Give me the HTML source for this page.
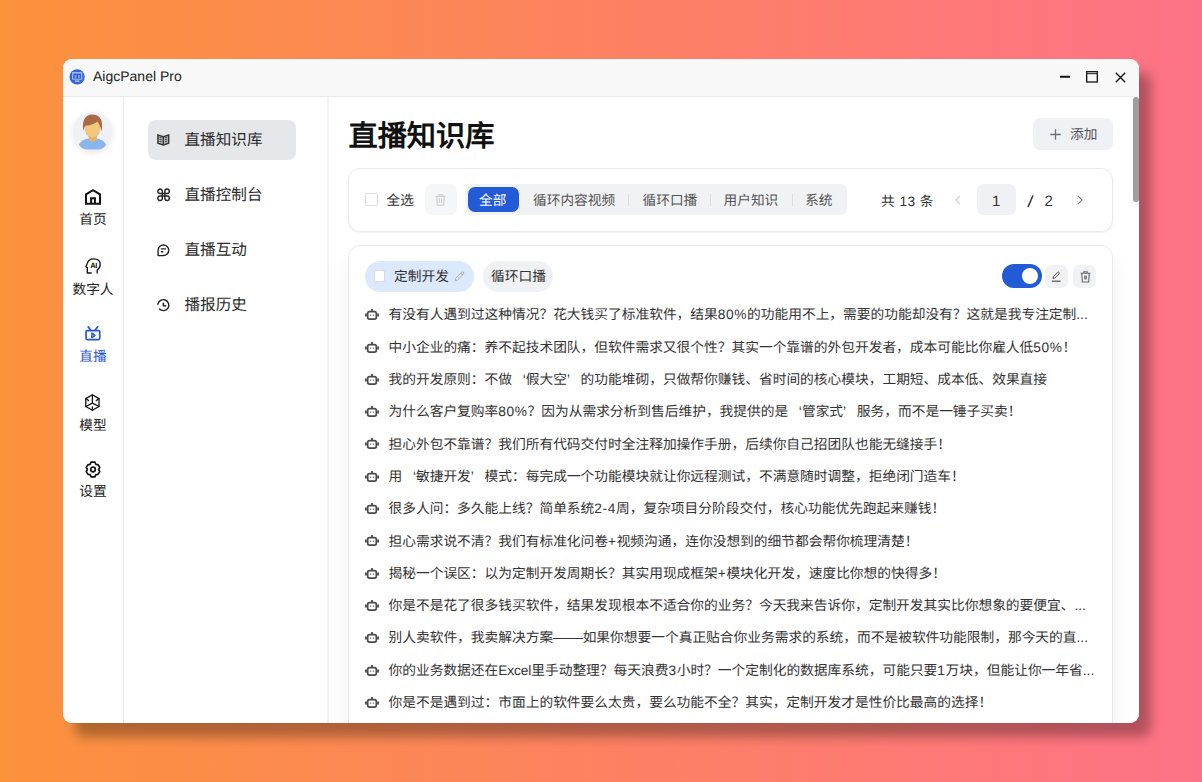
<!DOCTYPE html>
<html lang="zh-CN"><head><meta charset="utf-8">
<style>
*{box-sizing:border-box;margin:0;padding:0}
html,body{width:1202px;height:782px;overflow:hidden}
body{font-family:"Liberation Sans",sans-serif;text-rendering:geometricPrecision;background:linear-gradient(to right,#fb923c,#fe7287);position:relative;color:#333}
.abs{position:absolute}
#win{position:absolute;left:63px;top:59px;width:1076px;height:664px;border-radius:9px;background:#fff;overflow:hidden;box-shadow:12px 14px 12px rgba(0,0,0,0.3)}
#title{position:absolute;left:0;top:0;width:1076px;height:38px;background:#f8f8f9;border-bottom:1px solid #ebebec}
#side1{position:absolute;left:0;top:38px;width:61px;height:626px;border-right:1px solid #ececec;background:#fff}
#side2{position:absolute;left:61px;top:38px;width:205px;height:626px;border-right:2px solid #f4f4f6;background:#fff}
#main{position:absolute;left:266px;top:38px;width:810px;height:626px;background:#fff}
.t{position:absolute;white-space:nowrap;line-height:1}
.menu{left:121.5px;font-size:15.6px;color:#2a2a2a}
.card{border:1px solid #e8e9eb;border-radius:10px;background:#fff;box-shadow:0 1px 3px rgba(0,0,0,0.05)}
.tab{top:134.5px;font-size:13.7px;color:#555}
.vd{top:134.5px;width:1px;height:12px;background:#dcdee2}
.row{left:325.5px;font-size:13.72px;color:#333}
.ql,.qr{display:inline-block;width:13.72px}
.ql{text-align:right}
.dash{display:inline-block;width:29.5px;letter-spacing:0;transform:scaleX(1.1);transform-origin:left}
.asc{letter-spacing:0.6px}
.asl{letter-spacing:-0.12px}
.ell{letter-spacing:0;font-size:13.72px}
.lbl{left:0;width:60px;text-align:center;font-size:13.7px;color:#222}
svg{position:absolute;overflow:visible}
</style></head><body>
<div id="win">
  <div id="title">
    <svg style="left:6px;top:10px" width="16" height="16" viewBox="0 0 16 16">
      <circle cx="8.1" cy="7.9" r="7.6" fill="#3764d6"/>
      <rect x="3" y="3" width="10.3" height="7.8" rx="0.8" fill="#9db8f3"/>
      <rect x="4.2" y="4.6" width="7.8" height="5" fill="#2f5cd0"/>
      <rect x="5.6" y="5.9" width="1.8" height="3" fill="#7c9ef0"/>
      <rect x="9" y="5.9" width="1.8" height="3" fill="#7c9ef0"/>
      <rect x="5.9" y="11.4" width="4.6" height="1.6" fill="#a8c2f6"/>
    </svg>
    <div class="t" style="left:30px;top:10px;font-size:14px;color:#222">AigcPanel Pro</div>
    <svg style="left:996px;top:12px" width="12" height="12" viewBox="0 0 12 12"><path d="M1 5.8H11" stroke="#111" stroke-width="2"/></svg>
    <svg style="left:1023px;top:12px" width="12" height="12" viewBox="0 0 12 12"><rect x="0.7" y="0.7" width="10.6" height="10.3" fill="none" stroke="#111" stroke-width="1.3"/><path d="M0.7 2.6H11.3" stroke="#444" stroke-width="1.2"/></svg>
    <svg style="left:1052px;top:12.5px" width="11" height="11" viewBox="0 0 11 11"><path d="M0.8 0.8L10.2 10.2M10.2 0.8L0.8 10.2" stroke="#111" stroke-width="1.35"/></svg>
  </div>

  <div id="side1">
    <div class="abs" style="left:10px;top:15px;width:39px;height:39px;border-radius:50%;background:#f0f1f4;box-shadow:0 2px 6px rgba(0,0,0,0.10);overflow:hidden">
      <svg style="left:0;top:0" width="39" height="39" viewBox="0 0 39 39">
        <path d="M5.8 32.6Q9.5 27 16 26.5H23Q29.5 27 33.2 32.6L30.2 37.6H8.8Z" fill="#89b4ec"/>
        <path d="M15.7 22H23.7V28.3Q19.7 31 15.7 28.3Z" fill="#e6b567"/>
        <path d="M12.3 14Q12 22 16 24.6L19.5 26.4L23 24.6Q27 22 26.7 14Q26 9.2 19.5 9.2Q13 9.2 12.3 14Z" fill="#f3c87c" stroke="#c08a55" stroke-width="0.35"/>
        <path d="M10.2 19.2Q9.3 12 11 7.8Q13.6 2.6 19.6 2.5Q25.6 2.7 28.1 7.5Q29.8 12 28.7 19.6Q27.7 16 26.7 13.6Q25.8 11.2 24.3 9.6Q20.5 13.2 12.4 13.8Q11 15.5 10.2 19.2Z" fill="#a86b45"/>
      </svg>
    </div>
    <svg style="left:22px;top:92px" width="16" height="16" viewBox="0 0 16 16" fill="none" stroke="#111" stroke-width="2" stroke-linejoin="miter">
      <path d="M1 5.3L8 1.1L15 5.3V14.8H1Z"/><path d="M6.1 14.8V9.3H9.9V14.8"/>
    </svg>
    <div class="t lbl" style="top:116px">首页</div>
    <svg style="left:22px;top:160.5px" width="16" height="16" viewBox="0 0 16 16" fill="none" stroke="#111" stroke-width="1.35" stroke-linecap="round" stroke-linejoin="round">
      <path d="M12.2 15.1V12Q15.2 10.2 15.2 6.6Q15.2 0.8 8.6 0.8Q3.5 0.8 2.4 5.2L0.9 8.6L2.3 9.6V15H6.2"/>
      <text x="8.7" y="9.8" font-size="7.6" font-weight="bold" font-family="Liberation Sans" text-anchor="middle" fill="#111" stroke="none" letter-spacing="-0.3">AI</text>
    </svg>
    <div class="t lbl" style="top:186px">数字人</div>
    <svg style="left:22px;top:228.5px" width="16" height="16" viewBox="0 0 16 16" fill="none" stroke="#2b57cf" stroke-width="1.7" stroke-linecap="round" stroke-linejoin="round">
      <rect x="1.05" y="4.55" width="13.7" height="9" rx="1.2"/><path d="M3.2 0.9L5.4 3.7M12.6 0.9L10.4 3.7"/><path d="M6.9 7.1V11.6L10 9.35Z" stroke-width="1.5"/>
    </svg>
    <div class="t lbl" style="top:252.5px;color:#2b57cf">直播</div>
    <svg style="left:22px;top:296.5px" width="16" height="17" viewBox="0 0 16 17" fill="none" stroke="#111" stroke-width="1.3" stroke-linejoin="round" stroke-linecap="round">
      <path d="M7.4 0.8L14 4.6V12.5L7.4 16.3L0.8 12.5V4.6Z"/><path d="M7.4 0.8V9.1L0.8 12.5M7.4 9.1L14 12.5"/>
      <path d="M0.8 4.6L3.5 6.6M14 4.6L11.3 6.6M7.4 16.3V12.9"/>
    </svg>
    <div class="t lbl" style="top:322px">模型</div>
    <svg style="left:22px;top:364px" width="16" height="17" viewBox="0 0 16 17" fill="none" stroke="#111" stroke-width="1.7" stroke-linejoin="round">
      <path d="M6 1.2H10L10.8 3.3L13 3.6L14.8 6.4L13.6 8.5L14.8 10.6L13 13.4L10.8 13.7L10 15.8H6L5.2 13.7L3 13.4L1.2 10.6L2.4 8.5L1.2 6.4L3 3.6L5.2 3.3Z"/>
      <circle cx="8" cy="8.5" r="2.3"/>
    </svg>
    <div class="t lbl" style="top:388px">设置</div>
  </div>
  <div id="side2"></div>
  <div id="main"></div>
  <!-- main -->
  <div class="t" style="left:285.5px;top:63.5px;font-size:29.2px;font-weight:bold;color:#111">直播知识库</div>
  <div class="abs" style="left:970px;top:59px;width:80px;height:31.5px;border-radius:7px;background:#f0f1f4"></div>
  <svg style="left:986.5px;top:69.5px" width="11" height="11" viewBox="0 0 11 11"><path d="M5.5 0.3V10.7M0.3 5.5H10.7" stroke="#6b7079" stroke-width="1.3"/></svg>
  <div class="t" style="left:1007px;top:69px;font-size:13.7px;color:#50535a">添加</div>

  <div class="abs card" style="left:285px;top:108.5px;width:765px;height:64.5px;border-radius:12px;box-shadow:0 1px 2px rgba(0,0,0,0.06)"></div>
  <div class="abs" style="left:302px;top:133.5px;width:13px;height:13px;border:1px solid #d9dbe0;border-radius:2px;background:#fff"></div>
  <div class="t" style="left:323.5px;top:135px;font-size:13.7px;color:#333">全选</div>
  <div class="abs" style="left:362px;top:125px;width:31.5px;height:31px;border-radius:7px;background:#f5f6f8"></div>
  <svg style="left:372px;top:135px" width="11" height="12" viewBox="0 0 11 12" fill="none" stroke="#c9ccd2" stroke-width="1.1">
    <path d="M0.5 2.2H10.5M3.8 2.2V0.8H7.2V2.2M1.8 2.2L2.3 11.2H8.7L9.2 2.2M4.3 4.5V9M6.7 4.5V9"/>
  </svg>
  <div class="abs" style="left:402px;top:125px;width:381.5px;height:31px;border-radius:7px;background:#f1f2f4"></div>
  <div class="abs" style="left:405px;top:128px;width:51px;height:25.4px;border-radius:7px;background:#235ad6"></div>
  <div class="t" style="left:416px;top:134.5px;font-size:13.7px;color:#fff">全部</div>
  <div class="t tab" style="left:470px">循环内容视频</div>
  <div class="abs vd" style="left:565px"></div>
  <div class="t tab" style="left:579.5px">循环口播</div>
  <div class="abs vd" style="left:647px"></div>
  <div class="t tab" style="left:660.5px">用户知识</div>
  <div class="abs vd" style="left:728.5px"></div>
  <div class="t tab" style="left:742px">系统</div>

  <div class="t" style="left:818px;top:135.5px;font-size:13.7px;color:#333;letter-spacing:0.45px">共 13 条</div>
  <svg style="left:891.5px;top:136px" width="6" height="10" viewBox="0 0 6 10"><path d="M5 0.8L1 5L5 9.2" fill="none" stroke="#c8cacf" stroke-width="1.1"/></svg>
  <div class="abs" style="left:913.8px;top:125px;width:39px;height:31px;border-radius:7px;background:#f0f1f4"></div>
  <div class="t" style="left:929px;top:135px;font-size:15px;color:#333">1</div>
  <svg style="left:964px;top:136px" width="7" height="13" viewBox="0 0 7 13"><path d="M6 0.5L1 12" stroke="#333" stroke-width="1.5"/></svg>
  <div class="t" style="left:981.5px;top:135px;font-size:15px;color:#333">2</div>
  <svg style="left:1014px;top:136px" width="6" height="10" viewBox="0 0 6 10"><path d="M1 0.8L5 5L1 9.2" fill="none" stroke="#7a7d84" stroke-width="1.1"/></svg>

  <div class="abs card" style="left:285px;top:185.5px;width:765px;height:520px;border-radius:12px;box-shadow:0 12px 22px rgba(0,0,0,0.06)"></div>
  <!-- list -->
  <div class="abs" style="left:301.9px;top:201.5px;width:109px;height:31.4px;border-radius:16px;background:#dce8fb"></div>
  <div class="abs" style="left:310.5px;top:211.4px;width:11.5px;height:11.5px;border:1px solid #d4dbe6;border-radius:2px;background:#fff"></div>
  <div class="t" style="left:331px;top:210.5px;font-size:13.72px;color:#333">定制开发</div>
  <svg style="left:391px;top:212px" width="11" height="11" viewBox="0 0 11 11"><path d="M1.2 9.8L1.6 7.4L7.8 1.2Q8.6 0.6 9.4 1.4Q10.2 2.2 9.6 3L3.4 9.2Z M6.8 2.2L8.6 4" fill="none" stroke="#a9b0bb" stroke-width="1"/></svg>
  <div class="abs" style="left:419.6px;top:201.5px;width:70px;height:31.4px;border-radius:16px;background:#f0f1f3"></div>
  <div class="t" style="left:428px;top:210.5px;font-size:13.72px;color:#333">循环口播</div>
  <div class="abs" style="left:939px;top:205px;width:39.5px;height:24px;border-radius:12px;background:#235ad6"></div>
  <div class="abs" style="left:958.9px;top:208.8px;width:16px;height:16px;border-radius:50%;background:#fff"></div>
  <div class="abs" style="left:982.2px;top:205.6px;width:23.2px;height:23.2px;border-radius:7px;background:#f1f2f4"></div>
  <svg style="left:988px;top:211.5px" width="11" height="11" viewBox="0 0 11 11"><path d="M2 7.6L2.3 5.6L6.6 1.3Q7.3 0.7 8 1.4Q8.7 2.1 8.1 2.8L3.8 7.1Z" fill="none" stroke="#555" stroke-width="1"/><path d="M0.8 10.2H9.6" stroke="#555" stroke-width="1.2"/></svg>
  <div class="abs" style="left:1010px;top:205.6px;width:23.2px;height:23.2px;border-radius:7px;background:#f1f2f4"></div>
  <svg style="left:1016.5px;top:211.5px" width="11" height="12" viewBox="0 0 11 12" fill="none" stroke="#666" stroke-width="1.1"><path d="M0.6 2.2H10.4M3.8 2.2V0.8H7.2V2.2M1.8 2.2L2.3 11H8.7L9.2 2.2"/><rect x="4" y="4.6" width="3" height="3.8" fill="#888" stroke="none"/></svg>
  <svg style="left:301.6px;top:250.2px" width="14" height="11" viewBox="0 0 14 11"><path d="M7 0V2.2" stroke="#4a4a4a" stroke-width="1.8"/><rect x="2.7" y="2.7" width="8.6" height="7.4" rx="1.8" fill="none" stroke="#4a4a4a" stroke-width="1.7"/><path d="M0.9 4.6V7.6M13.1 4.6V7.6" stroke="#4a4a4a" stroke-width="1.8"/><path d="M5 6.1H6.2M7.8 6.1H9" stroke="#666" stroke-width="1.1"/></svg>
  <div class="t row" style="top:249.4px">有没有人遇到过这种情况？花大钱买了标准软件，结果<span class="asc">80%</span>的功能用不上，需要的功能却没有？这就是我专注定制<span class="ell">...</span></div>
  <svg style="left:301.6px;top:282.5px" width="14" height="11" viewBox="0 0 14 11"><path d="M7 0V2.2" stroke="#4a4a4a" stroke-width="1.8"/><rect x="2.7" y="2.7" width="8.6" height="7.4" rx="1.8" fill="none" stroke="#4a4a4a" stroke-width="1.7"/><path d="M0.9 4.6V7.6M13.1 4.6V7.6" stroke="#4a4a4a" stroke-width="1.8"/><path d="M5 6.1H6.2M7.8 6.1H9" stroke="#666" stroke-width="1.1"/></svg>
  <div class="t row" style="top:281.7px">中小企业的痛：养不起技术团队，但软件需求又很个性？其实一个靠谱的外包开发者，成本可能比你雇人低<span class="asc">50%</span>！</div>
  <svg style="left:301.6px;top:314.8px" width="14" height="11" viewBox="0 0 14 11"><path d="M7 0V2.2" stroke="#4a4a4a" stroke-width="1.8"/><rect x="2.7" y="2.7" width="8.6" height="7.4" rx="1.8" fill="none" stroke="#4a4a4a" stroke-width="1.7"/><path d="M0.9 4.6V7.6M13.1 4.6V7.6" stroke="#4a4a4a" stroke-width="1.8"/><path d="M5 6.1H6.2M7.8 6.1H9" stroke="#666" stroke-width="1.1"/></svg>
  <div class="t row" style="top:314.0px">我的开发原则：不做<span class="ql">‘</span>假大空<span class="qr">’</span>的功能堆砌，只做帮你赚钱、省时间的核心模块，工期短、成本低、效果直接</div>
  <svg style="left:301.6px;top:347.1px" width="14" height="11" viewBox="0 0 14 11"><path d="M7 0V2.2" stroke="#4a4a4a" stroke-width="1.8"/><rect x="2.7" y="2.7" width="8.6" height="7.4" rx="1.8" fill="none" stroke="#4a4a4a" stroke-width="1.7"/><path d="M0.9 4.6V7.6M13.1 4.6V7.6" stroke="#4a4a4a" stroke-width="1.8"/><path d="M5 6.1H6.2M7.8 6.1H9" stroke="#666" stroke-width="1.1"/></svg>
  <div class="t row" style="top:346.3px">为什么客户复购率<span class="asc">80%</span>？因为从需求分析到售后维护，我提供的是<span class="ql">‘</span>管家式<span class="qr">’</span>服务，而不是一锤子买卖！</div>
  <svg style="left:301.6px;top:379.4px" width="14" height="11" viewBox="0 0 14 11"><path d="M7 0V2.2" stroke="#4a4a4a" stroke-width="1.8"/><rect x="2.7" y="2.7" width="8.6" height="7.4" rx="1.8" fill="none" stroke="#4a4a4a" stroke-width="1.7"/><path d="M0.9 4.6V7.6M13.1 4.6V7.6" stroke="#4a4a4a" stroke-width="1.8"/><path d="M5 6.1H6.2M7.8 6.1H9" stroke="#666" stroke-width="1.1"/></svg>
  <div class="t row" style="top:378.6px">担心外包不靠谱？我们所有代码交付时全注释加操作手册，后续你自己招团队也能无缝接手！</div>
  <svg style="left:301.6px;top:411.7px" width="14" height="11" viewBox="0 0 14 11"><path d="M7 0V2.2" stroke="#4a4a4a" stroke-width="1.8"/><rect x="2.7" y="2.7" width="8.6" height="7.4" rx="1.8" fill="none" stroke="#4a4a4a" stroke-width="1.7"/><path d="M0.9 4.6V7.6M13.1 4.6V7.6" stroke="#4a4a4a" stroke-width="1.8"/><path d="M5 6.1H6.2M7.8 6.1H9" stroke="#666" stroke-width="1.1"/></svg>
  <div class="t row" style="top:410.9px">用<span class="ql">‘</span>敏捷开发<span class="qr">’</span>模式：每完成一个功能模块就让你远程测试，不满意随时调整，拒绝闭门造车！</div>
  <svg style="left:301.6px;top:444.0px" width="14" height="11" viewBox="0 0 14 11"><path d="M7 0V2.2" stroke="#4a4a4a" stroke-width="1.8"/><rect x="2.7" y="2.7" width="8.6" height="7.4" rx="1.8" fill="none" stroke="#4a4a4a" stroke-width="1.7"/><path d="M0.9 4.6V7.6M13.1 4.6V7.6" stroke="#4a4a4a" stroke-width="1.8"/><path d="M5 6.1H6.2M7.8 6.1H9" stroke="#666" stroke-width="1.1"/></svg>
  <div class="t row" style="top:443.2px">很多人问：多久能上线？简单系统<span class="asc">2-4</span>周，复杂项目分阶段交付，核心功能优先跑起来赚钱！</div>
  <svg style="left:301.6px;top:476.3px" width="14" height="11" viewBox="0 0 14 11"><path d="M7 0V2.2" stroke="#4a4a4a" stroke-width="1.8"/><rect x="2.7" y="2.7" width="8.6" height="7.4" rx="1.8" fill="none" stroke="#4a4a4a" stroke-width="1.7"/><path d="M0.9 4.6V7.6M13.1 4.6V7.6" stroke="#4a4a4a" stroke-width="1.8"/><path d="M5 6.1H6.2M7.8 6.1H9" stroke="#666" stroke-width="1.1"/></svg>
  <div class="t row" style="top:475.5px">担心需求说不清？我们有标准化问卷<span class="asc">+</span>视频沟通，连你没想到的细节都会帮你梳理清楚！</div>
  <svg style="left:301.6px;top:508.6px" width="14" height="11" viewBox="0 0 14 11"><path d="M7 0V2.2" stroke="#4a4a4a" stroke-width="1.8"/><rect x="2.7" y="2.7" width="8.6" height="7.4" rx="1.8" fill="none" stroke="#4a4a4a" stroke-width="1.7"/><path d="M0.9 4.6V7.6M13.1 4.6V7.6" stroke="#4a4a4a" stroke-width="1.8"/><path d="M5 6.1H6.2M7.8 6.1H9" stroke="#666" stroke-width="1.1"/></svg>
  <div class="t row" style="top:507.8px">揭秘一个误区：以为定制开发周期长？其实用现成框架<span class="asc">+</span>模块化开发，速度比你想的快得多！</div>
  <svg style="left:301.6px;top:540.9px" width="14" height="11" viewBox="0 0 14 11"><path d="M7 0V2.2" stroke="#4a4a4a" stroke-width="1.8"/><rect x="2.7" y="2.7" width="8.6" height="7.4" rx="1.8" fill="none" stroke="#4a4a4a" stroke-width="1.7"/><path d="M0.9 4.6V7.6M13.1 4.6V7.6" stroke="#4a4a4a" stroke-width="1.8"/><path d="M5 6.1H6.2M7.8 6.1H9" stroke="#666" stroke-width="1.1"/></svg>
  <div class="t row" style="top:540.1px">你是不是花了很多钱买软件，结果发现根本不适合你的业务？今天我来告诉你，定制开发其实比你想象的要便宜、<span class="ell">...</span></div>
  <svg style="left:301.6px;top:573.2px" width="14" height="11" viewBox="0 0 14 11"><path d="M7 0V2.2" stroke="#4a4a4a" stroke-width="1.8"/><rect x="2.7" y="2.7" width="8.6" height="7.4" rx="1.8" fill="none" stroke="#4a4a4a" stroke-width="1.7"/><path d="M0.9 4.6V7.6M13.1 4.6V7.6" stroke="#4a4a4a" stroke-width="1.8"/><path d="M5 6.1H6.2M7.8 6.1H9" stroke="#666" stroke-width="1.1"/></svg>
  <div class="t row" style="top:572.4px">别人卖软件，我卖解决方案<span class="dash">——</span>如果你想要一个真正贴合你业务需求的系统，而不是被软件功能限制，那今天的直<span class="ell">...</span></div>
  <svg style="left:301.6px;top:605.5px" width="14" height="11" viewBox="0 0 14 11"><path d="M7 0V2.2" stroke="#4a4a4a" stroke-width="1.8"/><rect x="2.7" y="2.7" width="8.6" height="7.4" rx="1.8" fill="none" stroke="#4a4a4a" stroke-width="1.7"/><path d="M0.9 4.6V7.6M13.1 4.6V7.6" stroke="#4a4a4a" stroke-width="1.8"/><path d="M5 6.1H6.2M7.8 6.1H9" stroke="#666" stroke-width="1.1"/></svg>
  <div class="t row" style="top:604.7px">你的业务数据还在<span class="asl">Excel</span>里手动整理？每天浪费<span class="asc">3</span>小时？一个定制化的数据库系统，可能只要<span class="asc">1</span>万块，但能让你一年省<span class="ell">...</span></div>
  <svg style="left:301.6px;top:637.8px" width="14" height="11" viewBox="0 0 14 11"><path d="M7 0V2.2" stroke="#4a4a4a" stroke-width="1.8"/><rect x="2.7" y="2.7" width="8.6" height="7.4" rx="1.8" fill="none" stroke="#4a4a4a" stroke-width="1.7"/><path d="M0.9 4.6V7.6M13.1 4.6V7.6" stroke="#4a4a4a" stroke-width="1.8"/><path d="M5 6.1H6.2M7.8 6.1H9" stroke="#666" stroke-width="1.1"/></svg>
  <div class="t row" style="top:637.0px">你是不是遇到过：市面上的软件要么太贵，要么功能不全？其实，定制开发才是性价比最高的选择！</div>
  <div class="abs" style="left:1070px;top:38px;width:5.8px;height:104.5px;border-radius:3px;background:#9d9d9d"></div>
  <!-- menu -->
  <div class="abs" style="left:85px;top:61px;width:148px;height:39.5px;border-radius:8px;background:#e6e7eb"></div>
  <svg style="left:94.4px;top:74.6px" width="13" height="12" viewBox="0 0 13 12">
    <path d="M0.2 0.1L6.3 2.1L12.4 0.1V9.8L6.3 11.8L0.2 9.8Z" fill="#333"/>
    <path d="M1.7 2.1L5.6 3.3V9.9L1.7 8.7Z M7 3.3L10.9 2.1V8.7L7 9.9Z" fill="#b9babd"/>
    <path d="M2.6 3.6H4.6M2.6 5.6H4.6M2.6 7.6H4.6M8 3.6H10M8 5.6H10M8 7.6H10" stroke="#333" stroke-width="0.9"/>
  </svg>
  <div class="t menu" style="top:74px">直播知识库</div>
  <svg style="left:94px;top:130px" width="13" height="12" viewBox="0 0 13 12" fill="none" stroke="#222" stroke-width="1.4">
    <path d="M5.35 4.55V2.3A2.25 2.25 0 1 0 3.1 4.55H5.35M7.85 4.55V2.3A2.25 2.25 0 1 1 10.1 4.55H7.85M7.85 7.05V9.3A2.25 2.25 0 1 0 10.1 7.05H7.85M5.35 7.05V9.3A2.25 2.25 0 1 1 3.1 7.05H5.35M5.35 4.55H7.85V7.05H5.35Z"/>
  </svg>
  <div class="t menu" style="top:129px">直播控制台</div>
  <svg style="left:94px;top:184.5px" width="13" height="13" viewBox="0 0 13 13" fill="none" stroke="#222" stroke-width="1.4" stroke-linecap="round" stroke-linejoin="round">
    <path d="M1.1 11.6V6.3A5.3 5.3 0 1 1 6.4 11.6Z"/><path d="M4.4 4.9H8.4M4.4 7.8H5.7"/>
  </svg>
  <div class="t menu" style="top:184px">直播互动</div>
  <svg style="left:94px;top:239.5px" width="13" height="13" viewBox="0 0 13 13" fill="none" stroke="#222" stroke-width="1.45" stroke-linecap="round" stroke-linejoin="round">
    <path d="M0.9 5.2A5.5 5.5 0 1 1 2.5 10.1"/><path d="M6.35 4.1V6.8H8.7"/>
  </svg>
  <div class="t menu" style="top:239px">播报历史</div>

</div>
</body></html>
